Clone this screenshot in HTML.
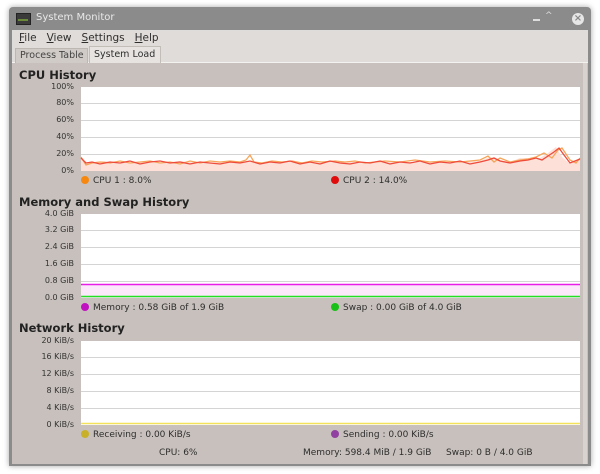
<!DOCTYPE html>
<html><head><meta charset="utf-8"><style>
body{margin:0;width:600px;height:474px;background:#fff;font-family:"DejaVu Sans","Liberation Sans",sans-serif;overflow:hidden;position:relative}
.win{position:absolute;left:9px;top:7px;width:582px;height:459px;background:#8b8b8b;border-radius:4px 4px 0 0;box-shadow:0 0 6px rgba(0,0,0,.35)}
.t{position:absolute;font-size:10px;color:#2e2e2e;white-space:nowrap}
.ax{position:absolute;font-size:8px;color:#333;text-align:right;width:60px;left:14px}
.dot{display:inline-block;width:8px;height:8px;border-radius:50%;margin-right:4px;vertical-align:-1px}
</style></head><body>
<div class="win"></div>
<!-- titlebar -->
<div style="position:absolute;left:16px;top:13px;width:13px;height:10px;background:#3a3a3a;border:1px solid #222"></div>
<div style="position:absolute;left:18px;top:19px;width:10px;height:2px;background:#6a8a3a"></div>
<div class="t" style="left:36px;top:12px;color:#e8e8e8;font-size:10px">System Monitor</div>
<div style="position:absolute;left:533px;top:19px;width:7px;height:2px;background:#ddd"></div>
<div class="t" style="left:545px;top:11px;color:#ddd;font-size:9px">^</div>
<div style="position:absolute;left:572px;top:13px;width:12px;height:12px;border-radius:50%;background:#e6e6e6;color:#888;font-size:10px;line-height:12px;text-align:center;font-weight:bold">×</div>
<!-- menu & tabs -->
<div style="position:absolute;left:12px;top:30px;width:576px;height:33px;background:#e0dcd9"></div>
<div class="t" style="left:19px;top:32px;font-size:10.5px"><u>F</u>ile&nbsp;&nbsp;&nbsp;<u>V</u>iew&nbsp;&nbsp;&nbsp;<u>S</u>ettings&nbsp;&nbsp;&nbsp;<u>H</u>elp</div>
<div style="position:absolute;left:12px;top:62px;width:576px;height:1px;background:#f4f2f0"></div>
<div style="position:absolute;left:15px;top:48px;width:71px;height:15px;background:#d0cbc7;border:1px solid #bdb7b2;border-bottom:none"></div>
<div class="t" style="left:20px;top:50px;font-size:9.5px;color:#444">Process Table</div>
<div style="position:absolute;left:89px;top:46px;width:70px;height:17px;background:#e6e3e0;border:1px solid #c3bdb8;border-bottom:none"></div>
<div class="t" style="left:94px;top:49px;font-size:9.5px">System Load</div>
<!-- body -->
<div style="position:absolute;left:12px;top:63px;width:576px;height:401px;background:#c7c0bc"></div>
<div style="position:absolute;left:583px;top:63px;width:4px;height:401px;background:#d8d3cf"></div>

<div class="t" style="left:19px;top:68px;font-size:11.5px;font-weight:bold;color:#222">CPU History</div>
<div class="t" style="left:19px;top:195px;font-size:11.5px;font-weight:bold;color:#222">Memory and Swap History</div>
<div class="t" style="left:19px;top:321px;font-size:11.5px;font-weight:bold;color:#222">Network History</div>

<svg style="position:absolute;left:0;top:0" width="600" height="474">
 <g fill="#fff"><rect x="81" y="87" width="499" height="84"/><rect x="81" y="214" width="499" height="84"/><rect x="81" y="341" width="499" height="84"/></g>
 <g stroke="#d4d4d4" stroke-width="1">
  <path d="M81 103.5H580M81 120.5H580M81 137.5H580M81 154.5H580"/>
  <path d="M81 230.5H580M81 247.5H580M81 264.5H580M81 281.5H580"/>
  <path d="M81 357.5H580M81 374.5H580M81 391.5H580M81 408.5H580"/>
 </g>
 <polygon fill="#fde0d8" points="81,157 86,164 95,162 105,161 120,163 140,162 160,163 180,161 200,163 220,162 240,163 250,162 270,163 290,162 310,162 330,162 360,162 390,162 420,162 450,162 480,161 490,157 500,160 510,162 520,158 540,158 548,153 556,147 562,157 570,164 580,158 580,171 81,171"/>
 <polyline fill="none" stroke="#f5a55a" stroke-width="1.3" points="81,157 86,165 92,163 100,162 110,163 120,161 130,163 140,162 150,161 160,163 170,162 180,164 190,161 200,163 210,161 220,162 230,161 240,162 246,160 250,155 254,162 262,163 272,161 282,162 292,161 302,163 312,161 322,162 335,161 345,162 355,161 365,163 375,162 385,161 400,162 415,160 430,162 445,161 460,162 470,161 480,160 488,156 494,162 500,158 510,162 520,160 528,159 536,157 544,153 552,158 558,150 562,148 570,160 576,163 580,158"/>
 <polyline fill="none" stroke="#ef4a3a" stroke-width="1.3" points="81,158 86,163 92,162 100,164 110,162 120,163 130,161 140,164 150,162 160,161 170,163 180,162 190,164 200,162 210,163 220,164 230,162 240,163 250,161 260,164 270,162 280,163 290,161 300,164 310,162 320,164 330,161 340,163 350,164 360,162 370,163 380,161 390,164 400,162 410,163 420,161 430,164 440,162 450,163 460,161 470,164 480,162 488,160 494,158 500,161 510,163 520,161 528,160 536,158 542,160 548,156 554,152 559,148 564,155 570,163 575,161 580,159"/>
 <rect x="81" y="284" width="499" height="14" fill="#fbe9fb"/>
 <line x1="81" y1="284.5" x2="580" y2="284.5" stroke="#e81ee8" stroke-width="1.5"/>
 <line x1="81" y1="296.5" x2="580" y2="296.5" stroke="#22e022" stroke-width="1.5"/>
 <line x1="81" y1="423.5" x2="580" y2="423.5" stroke="#f4e35a" stroke-width="1.5"/>
</svg>

<div class="ax" style="top:82px">100%</div><div class="ax" style="top:98px">80%</div><div class="ax" style="top:115px">60%</div><div class="ax" style="top:132px">40%</div><div class="ax" style="top:149px">20%</div><div class="ax" style="top:166px">0%</div>
<div class="ax" style="top:209px">4.0 GiB</div><div class="ax" style="top:225px">3.2 GiB</div><div class="ax" style="top:242px">2.4 GiB</div><div class="ax" style="top:259px">1.6 GiB</div><div class="ax" style="top:276px">0.8 GiB</div><div class="ax" style="top:293px">0.0 GiB</div>
<div class="ax" style="top:336px">20 KiB/s</div><div class="ax" style="top:352px">16 KiB/s</div><div class="ax" style="top:369px">12 KiB/s</div><div class="ax" style="top:386px">8 KiB/s</div><div class="ax" style="top:403px">4 KiB/s</div><div class="ax" style="top:420px">0 KiB/s</div>

<div class="t" style="left:81px;top:176px;font-size:9px"><span class="dot" style="background:#f7880f"></span>CPU 1 : 8.0%</div>
<div class="t" style="left:331px;top:176px;font-size:9px"><span class="dot" style="background:#e00b0b"></span>CPU 2 : 14.0%</div>
<div class="t" style="left:81px;top:303px;font-size:9px"><span class="dot" style="background:#c010c0"></span>Memory : 0.58 GiB of 1.9 GiB</div>
<div class="t" style="left:331px;top:303px;font-size:9px"><span class="dot" style="background:#18c018"></span>Swap : 0.00 GiB of 4.0 GiB</div>
<div class="t" style="left:81px;top:430px;font-size:9px"><span class="dot" style="background:#c8b028"></span>Receiving : 0.00 KiB/s</div>
<div class="t" style="left:331px;top:430px;font-size:9px"><span class="dot" style="background:#9040a0"></span>Sending : 0.00 KiB/s</div>
<div class="t" style="left:159px;top:448px;font-size:9px">CPU: 6%</div>
<div class="t" style="left:303px;top:448px;font-size:9px">Memory: 598.4 MiB / 1.9 GiB</div>
<div class="t" style="left:446px;top:448px;font-size:9px">Swap: 0 B / 4.0 GiB</div>
</body></html>
